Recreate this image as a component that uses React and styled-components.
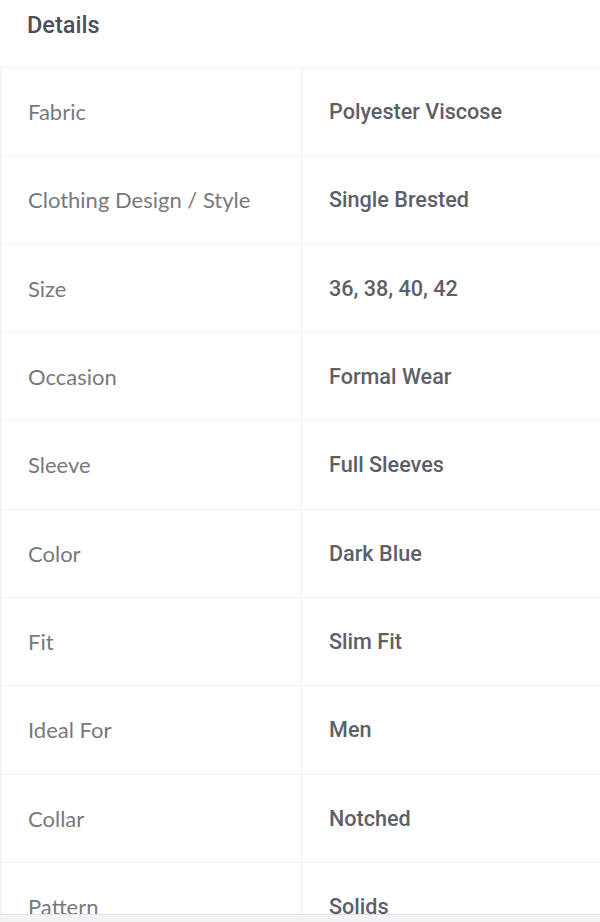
import React from "react"
import styled, { createGlobalStyle } from "styled-components"

const GlobalStyle = createGlobalStyle`
  html, body {
    margin: 0;
    padding: 0;
    background: #ffffff;
  }
`

// Whole viewport, clipped like a scrolled phone screen
const Screen = styled.div`
  width: 600px;
  height: 922px;
  display: flex;
  flex-direction: column;
  overflow: hidden;
  background: #fff;
`

const Content = styled.div`
  height: 914px;
  overflow: hidden;
  flex-shrink: 0;
`

const BottomStrip = styled.div`
  flex: 1;
  background: #f3f3f5;
  border-top: 1px solid #e2e2e6;
`

const Title = styled.h2`
  margin: 0;
  height: 67px;
  padding: 11px 0 0 27px;
  box-sizing: border-box;
  font-family: Roboto, "Liberation Sans", sans-serif;
  font-weight: 500;
  font-size: 23.5px;
  color: #4a4f59;
`

const Table = styled.div`
  border-top: 1px solid #f0f0f2;
  border-left: 1px solid #f0f0f2;
  width: 620px;
`

const Row = styled.div`
  display: grid;
  grid-template-columns: 300px 1fr;
  height: 88.33px;
  box-sizing: border-box;
  border-bottom: 1px solid #f0f0f2;
`

const Cell = styled.div`
  display: flex;
  align-items: center;
  padding-left: 27px;
  border-left: ${({ $value }) => ($value ? "1px solid #f0f0f2" : "none")};
  font-size: ${({ $value }) => ($value ? "21.6px" : "22px")};
  font-family: ${({ $value }) =>
    $value ? 'Roboto, "Liberation Sans", sans-serif' : 'Lato, "Open Sans", sans-serif'};
  font-weight: ${({ $value }) => ($value ? 500 : 400)};
  color: ${({ $value }) => ($value ? "#5c6069" : "#78797c")};
  white-space: nowrap;
`

const details = [
  ["Fabric", "Polyester Viscose"],
  ["Clothing Design / Style", "Single Brested"],
  ["Size", "36, 38, 40, 42"],
  ["Occasion", "Formal Wear"],
  ["Sleeve", "Full Sleeves"],
  ["Color", "Dark Blue"],
  ["Fit", "Slim Fit"],
  ["Ideal For", "Men"],
  ["Collar", "Notched"],
  ["Pattern", "Solids"],
]

const App = () => (
  <>
    <GlobalStyle />
    <Screen>
      <Content>
        <Title>Details</Title>
        <Table>
          {details.map(([label, value]) => (
            <Row key={label}>
              <Cell>{label}</Cell>
              <Cell $value>{value}</Cell>
            </Row>
          ))}
        </Table>
      </Content>
      <BottomStrip />
    </Screen>
  </>
)

export default App
